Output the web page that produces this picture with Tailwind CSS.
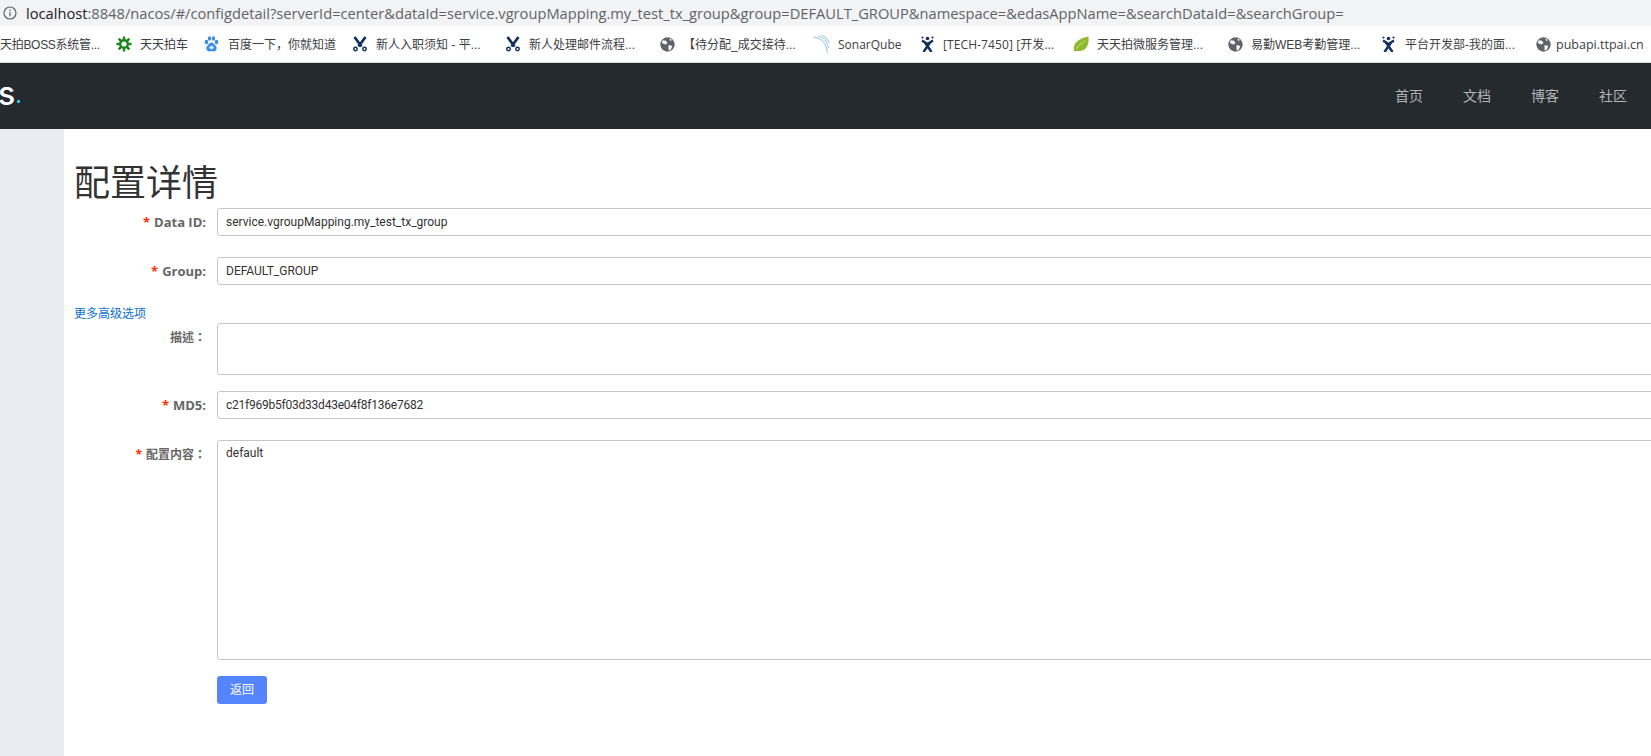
<!DOCTYPE html>
<html lang="zh">
<head>
<meta charset="utf-8">
<script src="https://cdn.jsdelivr.net/npm/@tailwindcss/browser@4"></script>
<title>配置详情</title>
</head>
<body class="h-[756px] w-[1651px] overflow-hidden bg-white font-['Liberation_Sans','Noto_Sans_CJK_SC',sans-serif]">
<div class="flex h-[26px] items-center bg-[#f1f3f4] pl-[3px] text-[14.68px] text-[#5f6368]">
  <svg class="mr-[9px] h-[14px] w-[14px]" viewBox="0 0 14 14" fill="none" stroke="#5f6368" stroke-width="1.200"><circle cx="7" cy="7" r="6"/><path d="M7 6v4.300M7 3.500v1.400"/></svg>
  <span class="font-['Open_Sans','Noto_Sans_CJK_SC',sans-serif]"><span class="text-[#202124]">localhost</span>:8848/nacos/#/configdetail?serverId=center&amp;dataId=service.vgroupMapping.my_test_tx_group&amp;group=DEFAULT_GROUP&amp;namespace=&amp;edasAppName=&amp;searchDataId=&amp;searchGroup=</span>
</div>
<div class="relative h-[37px] overflow-hidden border-b border-[#d8dadd] text-[12px] text-[#3c4043]">
  <span class="absolute left-0 top-[10px] tracking-[-0.3px]">天拍BOSS系统管...</span>
  <svg class="absolute left-[116px] top-[10px] h-[16px] w-[16px]" viewBox="0 0 16 16" fill="none" stroke="#14861a"><circle cx="8" cy="8" r="3.800" stroke-width="2.400"/><path stroke-width="2.400" d="M8 .5v3M8 12.500v3M.5 8h3M12.500 8h3M2.700 2.700l2.200 2.200M11.100 11.100l2.200 2.200M13.300 2.700l-2.200 2.200M4.900 11.100l-2.200 2.200"/></svg>
  <span class="absolute left-[140px] top-[10px]">天天拍车</span>
  <svg class="absolute left-[204px] top-[10px] h-[16px] w-[15px]" viewBox="0 0 15 16" fill="#3b8ee0"><ellipse cx="2.500" cy="6" rx="1.800" ry="2.200"/><ellipse cx="5.500" cy="2.500" rx="1.600" ry="2.200"/><ellipse cx="9.500" cy="2.500" rx="1.600" ry="2.200"/><ellipse cx="12.500" cy="6" rx="1.800" ry="2.200"/><path d="M7.500 6.500c2.200 0 2.800 2 4.400 3.500s.6 5.500-2 5.500c-1.200 0-1.600-.5-2.400-.5s-1.200.5-2.400.5c-2.600 0-3.600-4-2-5.500s2.200-3.500 4.400-3.500z"/><ellipse cx="7.500" cy="11.500" rx="2.200" ry="1.800" fill="#cfe4f8"/></svg>
  <span class="absolute left-[228px] top-[10px]">百度一下，你就知道</span>
  <svg class="absolute left-[352px] top-[10px] h-[16px] w-[16px]" viewBox="0 0 16 16" fill="none" stroke="#12315f" stroke-width="2.800"><path d="M2.500 1l7 9.500M13.500 1l-7 9.500"/><circle cx="3.500" cy="13" r="1.700" stroke-width="1.500"/><circle cx="12.500" cy="13" r="1.700" stroke-width="1.500"/></svg>
  <span class="absolute left-[376px] top-[10px]">新人入职须知 - 平...</span>
  <svg class="absolute left-[505px] top-[10px] h-[16px] w-[16px]" viewBox="0 0 16 16" fill="none" stroke="#12315f" stroke-width="2.800"><path d="M2.500 1l7 9.500M13.500 1l-7 9.500"/><circle cx="3.500" cy="13" r="1.700" stroke-width="1.500"/><circle cx="12.500" cy="13" r="1.700" stroke-width="1.500"/></svg>
  <span class="absolute left-[529px] top-[10px]">新人处理邮件流程...</span>
  <svg class="absolute left-[660px] top-[11px] h-[15px] w-[15px]" viewBox="0 0 14 14"><circle cx="7" cy="7" r="6.700" fill="#5f6368"/><path d="M2.500 3l3 .5 1.500 2-2 1.500-3.300-1.500zM8 7.500l3.500 1-1.500 3.500-2 .5zM8.500 1.500l2.500 1-1 1.500z" fill="#fff"/></svg>
  <span class="absolute left-[683px] top-[10px]">【待分配_成交接待...</span>
  <svg class="absolute left-[813px] top-[9px] h-[18px] w-[17px]" viewBox="0 0 17 18" fill="none" stroke="#8cc4e4" stroke-width="1"><path d="M1 2.500c7 0 12 5 13.500 15M5 1c5 1 9 5 10.500 12M9 .5c3 1 6 3.500 7 7.500"/></svg>
  <span class="absolute left-[838px] top-[10px] font-['Open_Sans',sans-serif]">SonarQube</span>
  <svg class="absolute left-[921px] top-[10px] h-[16px] w-[13px]" viewBox="0 0 13 16" fill="none" stroke="#12315f"><circle cx="6.500" cy="2.500" r="1.800" fill="#12315f" stroke="none"/><circle cx="1.500" cy="1.500" r="1.100" fill="#12315f" stroke="none"/><circle cx="11.500" cy="1.500" r="1.100" fill="#12315f" stroke="none"/><path stroke-width="2.500" d="M1 4.500l5.500 3.500 5.500-3.500M4 6.500l6.500 9.500M9 6.500L2.500 16"/></svg>
  <span class="absolute left-[943px] top-[10px] font-['Open_Sans','Noto_Sans_CJK_SC',sans-serif] tracking-[0.1px]">[TECH-7450] [开发...</span>
  <svg class="absolute left-[1073px] top-[10px] h-[16px] w-[16px]" viewBox="0 0 16 16"><path d="M1 15C-.5 8 5 2 15.500.5c1 9-3 14.500-9 14.500-2 0-4 .5-5.500 0z" fill="#8fba2f"/><path d="M3 13c3-4 6-6 9-8" stroke="#c9de8a" fill="none"/></svg>
  <span class="absolute left-[1097px] top-[10px]">天天拍微服务管理...</span>
  <svg class="absolute left-[1228px] top-[11px] h-[15px] w-[15px]" viewBox="0 0 14 14"><circle cx="7" cy="7" r="6.700" fill="#5f6368"/><path d="M2.500 3l3 .5 1.500 2-2 1.500-3.300-1.500zM8 7.500l3.500 1-1.500 3.500-2 .5zM8.500 1.500l2.500 1-1 1.500z" fill="#fff"/></svg>
  <span class="absolute left-[1251px] top-[10px]">易勤WEB考勤管理...</span>
  <svg class="absolute left-[1382px] top-[10px] h-[16px] w-[13px]" viewBox="0 0 13 16" fill="none" stroke="#12315f"><circle cx="6.500" cy="2.500" r="1.800" fill="#12315f" stroke="none"/><circle cx="1.500" cy="1.500" r="1.100" fill="#12315f" stroke="none"/><circle cx="11.500" cy="1.500" r="1.100" fill="#12315f" stroke="none"/><path stroke-width="2.500" d="M1 4.500l5.500 3.500 5.500-3.500M4 6.500l6.500 9.500M9 6.500L2.500 16"/></svg>
  <span class="absolute left-[1405px] top-[10px]">平台开发部-我的面...</span>
  <svg class="absolute left-[1536px] top-[11px] h-[15px] w-[15px]" viewBox="0 0 14 14"><circle cx="7" cy="7" r="6.700" fill="#5f6368"/><path d="M2.500 3l3 .5 1.500 2-2 1.500-3.300-1.500zM8 7.500l3.500 1-1.500 3.500-2 .5zM8.500 1.500l2.500 1-1 1.500z" fill="#fff"/></svg>
  <span class="absolute left-[1556px] top-[10px] font-['Open_Sans',sans-serif] text-[12.5px]">pubapi.ttpai.cn</span>
</div>
<div class="relative flex h-[66px] items-center bg-[#252a2f] text-[14px] text-[#b3b5b7]">
  <span class="absolute left-[-2px] top-[12px] font-['Inter',sans-serif] text-[32px] font-medium leading-[38px] text-white">s</span>
  <span class="absolute left-[17px] top-[37px] h-[3px] w-[3px] bg-[#22c4e0]"></span>
  <nav class="ml-auto flex gap-[40px] pr-[24px]"><a>首页</a><a>文档</a><a>博客</a><a>社区</a></nav>
</div>
<div class="flex h-[627px]">
  <aside class="w-[64px] shrink-0 bg-[#e9edf2]"></aside>
  <main class="relative flex-1 pl-[10px]">
    <h1 class="pt-[30px] text-[36px] font-normal leading-[49px] text-[#333]">配置详情</h1>
    <div class="flex h-[28px] text-[12px]">
      <label class="w-[143px] pr-[11px] text-right font-['Open_Sans',sans-serif] text-[13px] font-bold leading-[28px] text-[#666]"><span class="mr-[4px] text-[#ff3000]">*</span>Data ID:</label>
      <div class="w-[1500px] rounded-[3px] border border-[#c4c6cf] pl-[8px] font-['Roboto','Noto_Sans_CJK_SC',sans-serif] leading-[26px] text-[#333]">service.vgroupMapping.my_test_tx_group</div>
    </div>
    <div class="mt-[21px] flex h-[28px] text-[12px]">
      <label class="w-[143px] pr-[11px] text-right font-['Open_Sans',sans-serif] text-[13px] font-bold leading-[28px] text-[#666]"><span class="mr-[4px] text-[#ff3000]">*</span>Group:</label>
      <div class="w-[1500px] rounded-[3px] border border-[#c4c6cf] pl-[8px] font-['Roboto','Noto_Sans_CJK_SC',sans-serif] leading-[26px] text-[#333]">DEFAULT_GROUP</div>
    </div>
    <a class="mt-[21px] block h-[17px] text-[12px] leading-[17px] text-[#0b6fd0]">更多高级选项</a>
    <div class="flex h-[52px] text-[12px]">
      <label lang="zh-TW" class="w-[143px] pr-[11px] pt-[7px] text-right font-['Open_Sans','Noto_Sans_CJK_TC',sans-serif] font-bold leading-[16px] text-[#666]">描述：</label>
      <div class="w-[1500px] rounded-[3px] border border-[#c4c6cf]"></div>
    </div>
    <div class="mt-[16px] flex h-[28px] text-[12px]">
      <label class="w-[143px] pr-[11px] text-right font-['Open_Sans',sans-serif] text-[13px] font-bold leading-[28px] text-[#666]"><span class="mr-[4px] text-[#ff3000]">*</span>MD5:</label>
      <div class="w-[1500px] rounded-[3px] border border-[#c4c6cf] pl-[8px] font-['Roboto','Noto_Sans_CJK_SC',sans-serif] leading-[26px] tracking-[-0.23px] text-[#333]">c21f969b5f03d33d43e04f8f136e7682</div>
    </div>
    <div class="mt-[21px] flex h-[220px] text-[12px]">
      <label lang="zh-TW" class="w-[143px] pr-[11px] pt-[7px] text-right font-['Open_Sans','Noto_Sans_CJK_TC',sans-serif] font-bold leading-[16px] text-[#666]"><span class="mr-[4px] text-[#ff3000]">*</span>配置内容：</label>
      <div class="w-[1500px] rounded-[3px] border border-[#c4c6cf] pl-[8px] pt-[4px] font-['Roboto','Noto_Sans_CJK_SC',sans-serif] leading-[16px] text-[#333]">default</div>
    </div>
    <div class="mt-[16px] pl-[143px]">
      <button class="h-[28px] w-[50px] rounded-[3px] bg-[#5584ff] text-[12px] text-white">返回</button>
    </div>
  </main>
</div>
</body>
</html>
